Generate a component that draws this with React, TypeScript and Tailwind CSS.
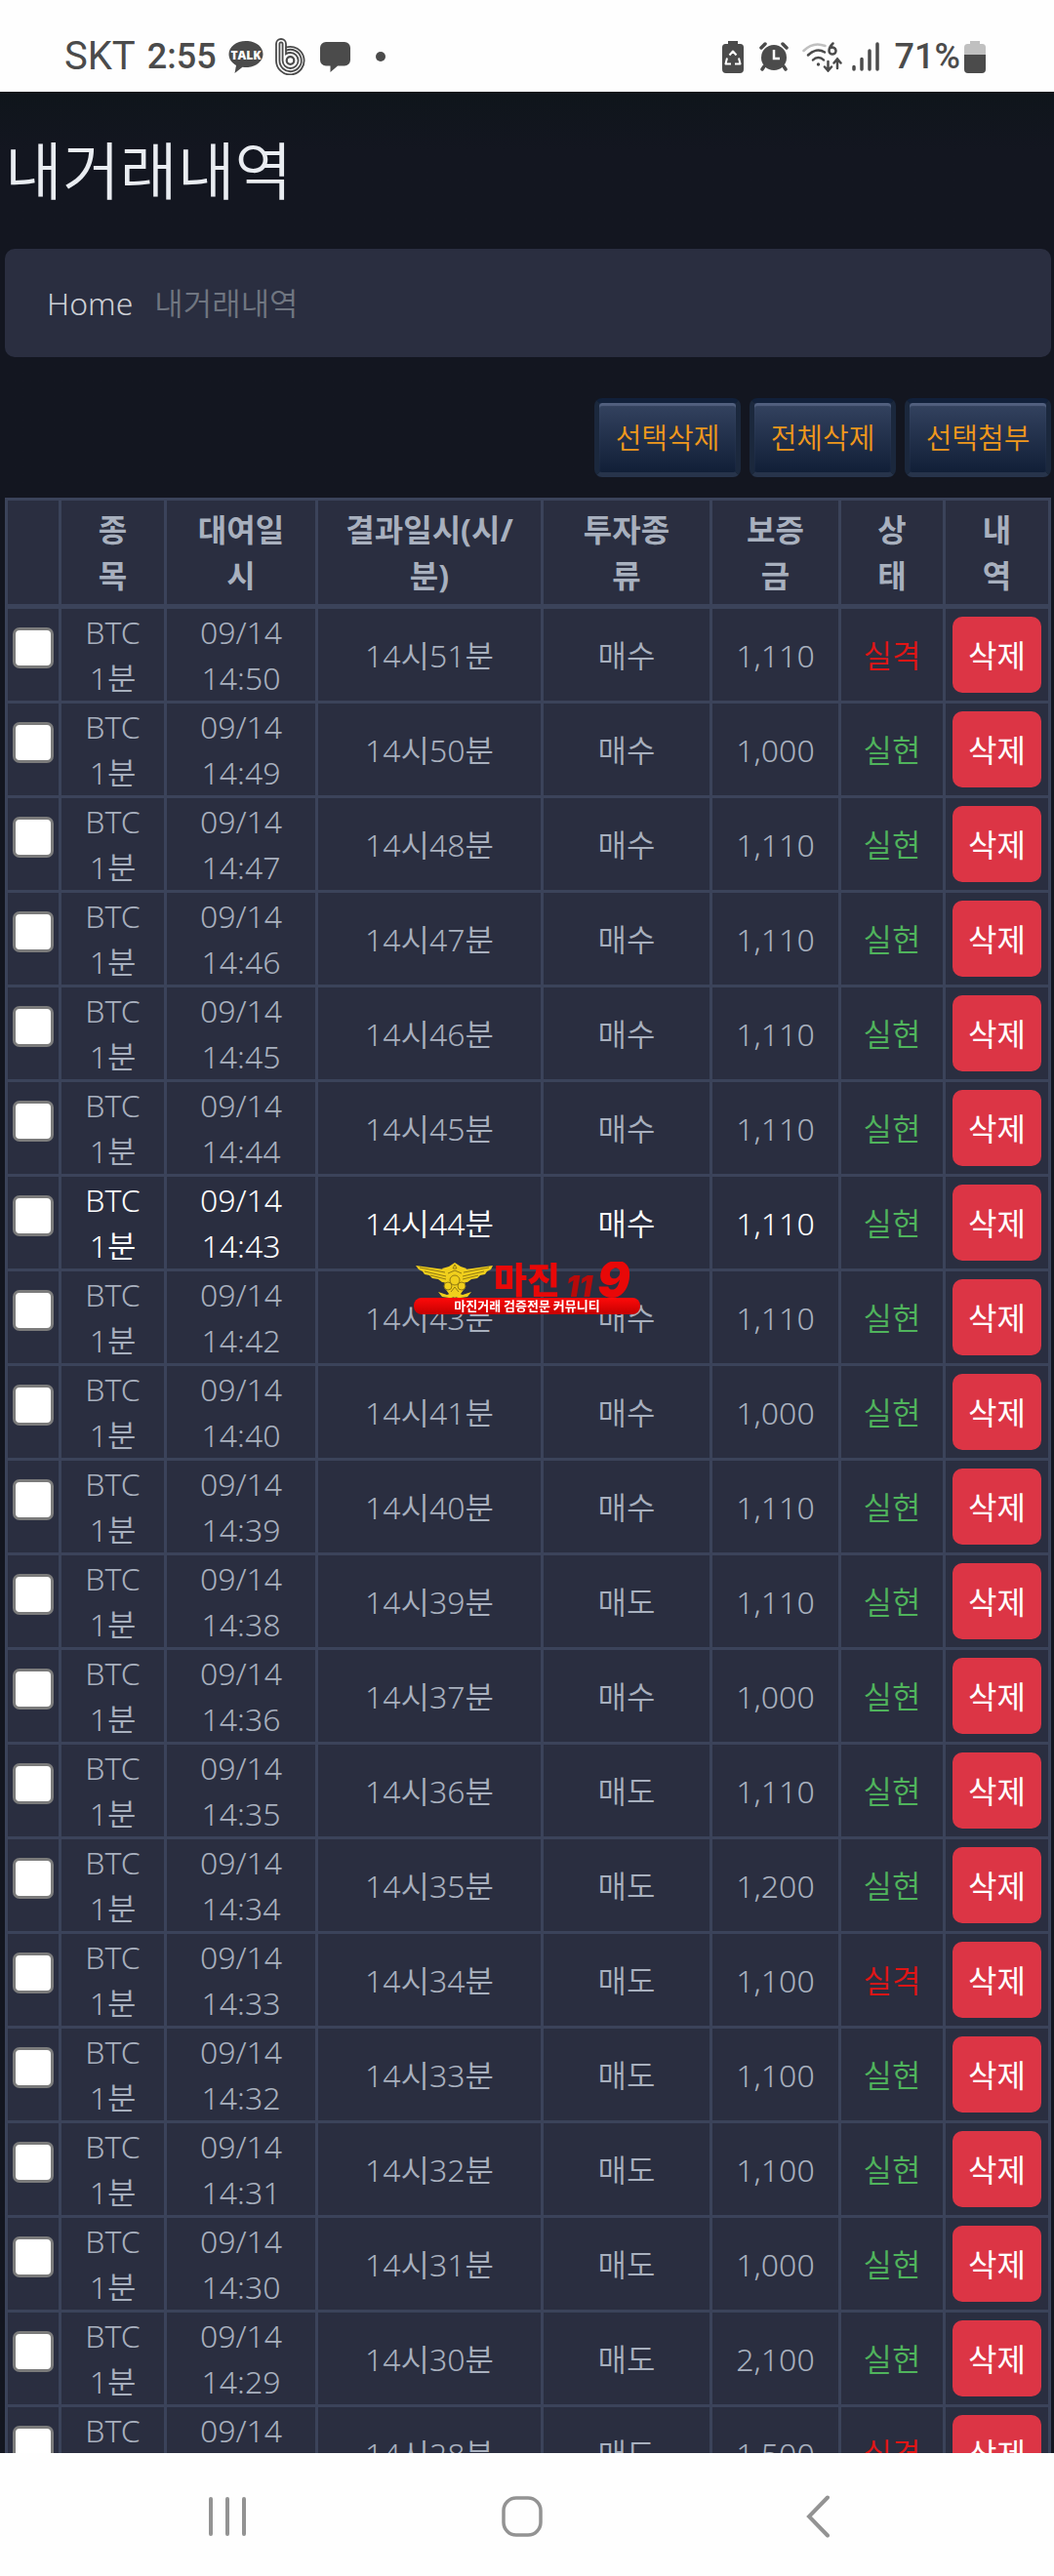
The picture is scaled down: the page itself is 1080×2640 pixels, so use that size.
import { useState } from 'react'
import clsx from 'clsx'

interface Trade {
  /** Start time, also used as the row key */
  start: string
  result: string
  side: '매수' | '매도'
  deposit: string
  won: boolean
}

const TRADES: Trade[] = [
  { start: '14:50', result: '14시51분', side: '매수', deposit: '1,110', won: false },
  { start: '14:49', result: '14시50분', side: '매수', deposit: '1,000', won: true },
  { start: '14:47', result: '14시48분', side: '매수', deposit: '1,110', won: true },
  { start: '14:46', result: '14시47분', side: '매수', deposit: '1,110', won: true },
  { start: '14:45', result: '14시46분', side: '매수', deposit: '1,110', won: true },
  { start: '14:44', result: '14시45분', side: '매수', deposit: '1,110', won: true },
  { start: '14:43', result: '14시44분', side: '매수', deposit: '1,110', won: true },
  { start: '14:42', result: '14시43분', side: '매수', deposit: '1,110', won: true },
  { start: '14:40', result: '14시41분', side: '매수', deposit: '1,000', won: true },
  { start: '14:39', result: '14시40분', side: '매수', deposit: '1,110', won: true },
  { start: '14:38', result: '14시39분', side: '매도', deposit: '1,110', won: true },
  { start: '14:36', result: '14시37분', side: '매수', deposit: '1,000', won: true },
  { start: '14:35', result: '14시36분', side: '매도', deposit: '1,110', won: true },
  { start: '14:34', result: '14시35분', side: '매도', deposit: '1,200', won: true },
  { start: '14:33', result: '14시34분', side: '매도', deposit: '1,100', won: false },
  { start: '14:32', result: '14시33분', side: '매도', deposit: '1,100', won: true },
  { start: '14:31', result: '14시32분', side: '매도', deposit: '1,100', won: true },
  { start: '14:30', result: '14시31분', side: '매도', deposit: '1,000', won: true },
  { start: '14:29', result: '14시30분', side: '매도', deposit: '2,100', won: true },
  { start: '14:27', result: '14시28분', side: '매도', deposit: '1,500', won: false },
]

const HEADERS = ['', '종\n목', '대여일\n시', '결과일시(시/\n분)', '투자종\n류', '보증\n금', '상\n태', '내\n역']

const ACTIONS = ['선택삭제', '전체삭제', '선택첨부']

function StatusBar() {
  return (
    <header className="flex h-[94px] shrink-0 items-center justify-between bg-[#fefefe] pt-[22px] pr-[66px] pl-[66px] font-['Roboto',sans-serif] text-[#4b4b4b]">
      <div className="flex items-center">
        <span className="text-[40px] leading-[40px] font-normal">SKT</span>
        <span className="ml-3 text-[36px] leading-[40px] font-medium">2:55</span>
        <svg className="ml-3 h-9 w-9" viewBox="0 0 36 36" aria-label="KakaoTalk">
          <path
            d="M18 2C8 2 .5 8 .5 15.5c0 5 3 9 7.5 11.5L6.5 35l8-6.300c1.200.2 2.300.3 3.500.3 10 0 17.500-6 17.500-13.500S28 2 18 2z"
            fill="currentColor"
          />
          <text
            x="18"
            y="21"
            textAnchor="middle"
            fontSize="12"
            fontWeight="800"
            fontFamily="Open Sans, sans-serif"
            fill="#fff"
          >
            TALK
          </text>
        </svg>
        <svg className="ml-3 h-[38px] w-[31px]" viewBox="0 0 31 38" fill="none" stroke="currentColor" strokeWidth="1.8">
          <path d="M1 23V6a5 5 0 0 1 10 0v3.5a14.3 14.3 0 1 1-10 13.5z" />
          <path d="M4.400 23V6a1.600 1.600 0 0 1 3.200 0v17a8 8 0 1 0 8-8c-2 0-3.500.5-4.600 1.300V9.500" />
          <path d="M4.400 23a11.200 11.200 0 1 0 6.600-10.200" />
          <circle cx="15.500" cy="23" r="3.800" strokeWidth="2.2" />
        </svg>
        <svg className="ml-[15px] h-[31px] w-[31px]" viewBox="0 0 31 31" fill="currentColor">
          <path d="M6 0h19a6 6 0 0 1 6 6v12.500a6 6 0 0 1-6 6h-7L10.500 31v-6.500H6a6 6 0 0 1-6-6V6a6 6 0 0 1 6-6z" />
        </svg>
        <span className="ml-[26px] h-2.5 w-2.5 rounded-full bg-[#4b4b4b]" />
      </div>

      <div className="flex items-center">
        <svg className="h-[33px] w-[22px]" viewBox="0 0 22 33">
          <path
            d="M6 0h10v3h2.500A3.500 3.500 0 0 1 22 6.500V29a4 4 0 0 1-4 4H4a4 4 0 0 1-4-4V6.500A3.500 3.500 0 0 1 3.500 3H6z"
            fill="currentColor"
          />
          <path
            d="M7.500 14.500 11 10.500l3.500 4M5 17.500 3.500 23.500h5.500M17 17.500l1.500 6H13"
            fill="none"
            stroke="#fff"
            strokeWidth="2"
            strokeLinejoin="round"
          />
        </svg>
        <svg className="ml-4 h-[30px] w-[30px]" viewBox="0 0 30 30">
          <circle cx="15" cy="16" r="13" fill="currentColor" />
          <path d="m2 6 4-4M28 6l-4-4M5 25l-2 3M25 25l2 3" stroke="currentColor" strokeWidth="3.5" strokeLinecap="round" />
          <path d="M15 8v9h6" fill="none" stroke="#fff" strokeWidth="2.5" />
        </svg>
        <svg
          className="ml-[14px] h-[31px] w-[41px]"
          viewBox="0 0 41 31"
          fill="none"
          stroke="currentColor"
          strokeWidth="2.5"
          strokeLinecap="round"
        >
          <path d="M1.500 9C8 2.500 16 1 23.500 4" stroke="#c0c0c0" />
          <path d="M6 13.500c5-5 11.500-6.500 17-3M11 18.500c3-3.300 8-3.300 11 0" />
          <circle cx="16.500" cy="23" r="1.700" fill="currentColor" stroke="none" />
          <path d="M31.500 1.500c-2 2-4 5-4 7.500a3.500 3.500 0 1 0 2.500-3.300" />
          <path d="M26.500 20v9m-3.500-3.500 3.500 4 3.500-4M36 27v-9m-3.500 3.500 3.500-4 3.500 4" />
        </svg>
        <svg
          className="ml-2.5 h-[30px] w-[28px]"
          viewBox="0 0 28 30"
          stroke="currentColor"
          strokeWidth="3.5"
          strokeLinecap="round"
        >
          <path d="M2 25.500V28M10 17.500V28M18 9v19M26 2v26" />
        </svg>
        <span className="ml-4 text-[36px] leading-[40px] font-medium">71%</span>
        <svg className="mr-1 ml-1 h-[33px] w-[22px]" viewBox="0 0 22 33">
          <path d="M6 0h10v3h2.500A3.500 3.500 0 0 1 22 6.500V14H0V6.500A3.500 3.500 0 0 1 3.500 3H6z" fill="#c0c0c0" />
          <path d="M0 14h22v15a4 4 0 0 1-4 4H4a4 4 0 0 1-4-4z" fill="currentColor" />
        </svg>
      </div>
    </header>
  )
}

/** Community logo that floats in the middle of the window */
function Watermark() {
  return (
    <div className="pointer-events-none fixed top-1/2 left-1/2 -translate-x-1/2 -translate-y-1/2">
      <svg className="h-[54px] w-[232px]" viewBox="0 0 232 54" fontFamily="Noto Sans CJK KR, sans-serif">
        <defs>
          <linearGradient id="wm-bar" x1="0" y1="0" x2="0" y2="1">
            <stop offset="0" stopColor="#ff0a0a" />
            <stop offset="1" stopColor="#c40000" />
          </linearGradient>
        </defs>
        <g fill="#f0cf1c">
          <path d="M2 4l29 4 5 5v9l-7-1-4-3-6-1-3-3-5-1-2-3-4-2z" />
          <path d="M81 4 53 8l-5 5v9l7-1 4-3 6-1 3-3 5-1 2-3 4-2z" />
          <path d="m42 1 6 4 6 2-3 7 2 12-5 7-6 4-6-4-5-7 2-12-4-7 7-2z" />
          <path d="m25 31 9 3 8-3 8 3 9-3-4 5-7 1 1 1-7-2-7 2 1-1-7-1z" />
        </g>
        <g fill="none" stroke="#927a12" strokeWidth="1">
          <path d="m6 6 26 5M11 10l22 5M17 14l16 4M77 6l-26 5M72 10l-22 5M66 14l-16 4" />
          <circle cx="42" cy="19" r="5" />
          <circle cx="35" cy="25" r="4" />
          <circle cx="49" cy="25" r="4" />
          <path d="m42 3 2 4h-4zM38 31l4-5 4 5M35 12l7-3 7 3" />
        </g>
        <text x="82" y="33" fontSize="37" fontWeight="900" fill="#e80808">
          마진
        </text>
        <text x="156" y="36" fontSize="30" fontWeight="900" fontStyle="italic" fontFamily="Inter, sans-serif" fill="#b80a0a">
          11
        </text>
        <text x="188" y="36" fontSize="50" fontWeight="900" fontStyle="italic" fontFamily="Inter, sans-serif" fill="#e80808">
          9
        </text>
        <rect y="37" width="232" height="17" rx="8" fill="url(#wm-bar)" />
        <text x="116" y="50" textAnchor="middle" fontSize="13" fontWeight="700" fill="#fff">
          마진거래 검증전문 커뮤니티
        </text>
      </svg>
    </div>
  )
}

function NavBar() {
  return (
    <nav className="grid h-[126px] shrink-0 grid-cols-3 items-center bg-[#fefefe] pt-[4px] pr-[91px] pl-[82px] text-[#939393]">
      <button type="button" aria-label="Recent apps" className="flex justify-center">
        <svg className="h-[42px] w-[42px]" viewBox="0 0 42 42" stroke="currentColor" strokeWidth="4" strokeLinecap="round">
          <path d="M4 3v36M21 3v36M38 3v36" />
        </svg>
      </button>
      <button type="button" aria-label="Home" className="flex justify-center">
        <svg className="h-[42px] w-[42px]" viewBox="0 0 42 42" fill="none" stroke="currentColor" strokeWidth="3.5">
          <rect x="2" y="2" width="38" height="38" rx="13" />
        </svg>
      </button>
      <button type="button" aria-label="Back" className="flex justify-center">
        <svg className="h-[44px] w-[24px]" viewBox="0 0 24 44" fill="none" stroke="currentColor" strokeWidth="4" strokeLinecap="round">
          <path d="M22 2.500 3 22l19 19.500" />
        </svg>
      </button>
    </nav>
  )
}

export default function App() {
  const [selected, setSelected] = useState<string[]>([])

  const toggle = (id: string) => {
    setSelected(prev => (prev.includes(id) ? prev.filter(v => v !== id) : [...prev, id]))
  }

  return (
    <div className="flex h-screen flex-col bg-[#131620] font-['Noto_Sans','Noto_Sans_CJK_KR',sans-serif] text-[32px] leading-[47px] font-[350] text-[#a8b0be]">
      <StatusBar />

      <main className="min-h-0 flex-1 overflow-hidden bg-linear-to-b from-[#0f151b] to-[#131620] to-[60px] pr-[3px] pl-[5px]">
        <h1 className="mt-[42px] text-[64px] leading-[77px] text-[#e9ecf1]">내거래내역</h1>

        <div className="mt-[42px] flex h-[111px] items-center gap-[22px] rounded-[10px] bg-[#2a2e40] pl-[43px]">
          <a href="#home" className="text-[#cdd0d6]">
            Home
          </a>
          <span className="text-[#707681]">내거래내역</span>
        </div>

        <div className="mt-[42px] flex justify-end gap-[9px]">
          {ACTIONS.map(label => (
            <button
              key={label}
              type="button"
              className="h-[81px] w-[150px] rounded-[8px] border-[5px] border-t-[#11203a] border-r-[#1b283d] border-b-[#27344b] border-l-[#1b283d] bg-linear-to-b from-[#344360] to-[#111f37] text-[29px] text-[#f0981c] shadow-[inset_0_3px_1px_#52607f]"
            >
              {label}
            </button>
          ))}
        </div>

        <table className="mt-[21px] w-full table-fixed border-collapse border-[3px] border-[#3b435a] bg-[#2a2e40] text-center">
          <colgroup>
            <col className="w-[55px]" />
            <col className="w-[108px]" />
            <col className="w-[155px]" />
            <col className="w-[231px]" />
            <col className="w-[173px]" />
            <col className="w-[132px]" />
            <col className="w-[107px]" />
            <col className="w-[108px]" />
          </colgroup>
          <thead>
            <tr className="h-[110px]">
              {HEADERS.map((label, i) => (
                <th key={i} className="border-[3px] border-b-[5px] border-[#3b435a] p-0 font-bold whitespace-pre-line">
                  {label}
                </th>
              ))}
            </tr>
          </thead>
          <tbody>
            {TRADES.map(t => (
              <tr
                key={t.start}
                className={clsx(
                  'h-[97px] hover:text-white [&>td]:border-[3px] [&>td]:border-[#3b435a] [&>td]:p-0',
                  t.start === '14:43' && 'text-white',
                )}
              >
                <td>
                  <input
                    type="checkbox"
                    aria-label={`${t.start} 선택`}
                    checked={selected.includes(t.start)}
                    onChange={() => toggle(t.start)}
                    className="mx-auto mb-[14px] block h-[42px] w-[42px] appearance-none rounded-[7px] border-[3px] border-[#7b7b7b] bg-white checked:bg-[#0075ff]"
                  />
                </td>
                <td>
                  BTC
                  <br />
                  1분
                </td>
                <td>
                  09/14
                  <br />
                  {t.start}
                </td>
                <td>{t.result}</td>
                <td>{t.side}</td>
                <td>{t.deposit}</td>
                <td className={t.won ? 'text-[#50b45c]' : 'text-[#e01515]'}>{t.won ? '실현' : '실격'}</td>
                <td>
                  <button
                    type="button"
                    className="mx-auto block h-[78px] w-[91px] rounded-[10px] bg-[#dc3545] font-normal text-white"
                  >
                    삭제
                  </button>
                </td>
              </tr>
            ))}
          </tbody>
        </table>
      </main>

      <NavBar />
      <Watermark />
    </div>
  )
}
